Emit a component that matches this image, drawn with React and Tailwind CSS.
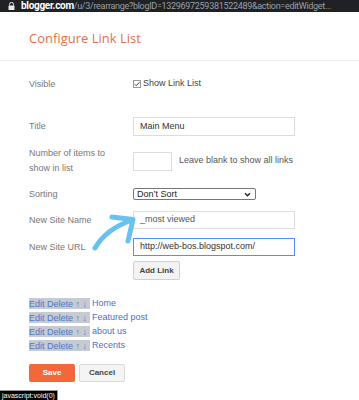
const links = ['Home', 'Featured post', 'about us', 'Recents'];

function Label({ children }) {
  return <div className="w-[104px] shrink-0 text-[9px] leading-[15px] text-[#777]">{children}</div>;
}

export default function App() {
  return (
    <div className="relative h-[400px] w-full overflow-hidden bg-white font-['Liberation_Sans',Arial,sans-serif]">
      {/* address bar */}
      <div className="flex h-[12px] items-center gap-[6px] bg-[#202124] pl-[8px] pr-[2px]">
        <svg width="7" height="8" viewBox="0 0 7 8" className="shrink-0">
          <path d="M1.5 3.5V2.4a2 2 0 0 1 4 0v1.1" fill="none" stroke="#e8e8e8" strokeWidth="1" />
          <rect x="0.5" y="3.5" width="6" height="4.5" rx="0.6" fill="#e8e8e8" />
        </svg>
        <div className="whitespace-nowrap font-['Roboto',sans-serif] text-[10px] leading-[12px] tracking-[-0.3px]">
          <span className="font-bold text-white">blogger.com</span>
          <span className="text-[9px] text-[#9aa0a6]">/u/3/rearrange?blogID=1329697259381522489&amp;action=editWidget...</span>
        </div>
      </div>

      {/* header */}
      <div className="h-[49px] border-b border-[#eeeeee] pl-[29px] pt-[16px]">
        <h1 className="font-['Open_Sans',sans-serif] text-[13px] leading-[20px] text-[#e8704a]">Configure Link List</h1>
      </div>

      <div className="pl-[29px]">
        {/* visible */}
        <div className="mt-[14px] flex h-[18px] items-center">
          <Label>Visible</Label>
          <div className="flex items-center gap-[2px] text-[9px] text-[#444]">
            <span className="flex h-[8px] w-[8px] items-center justify-center border border-[#999] bg-white">
              <svg width="7" height="6" viewBox="0 0 7 6">
                <path d="M0.8 3.2 2.6 5 6.4 0.8" fill="none" stroke="#333" strokeWidth="1.1" />
              </svg>
            </span>
            <span>Show Link List</span>
          </div>
        </div>

        {/* title */}
        <div className="mt-[24px] flex h-[19px] items-center">
          <Label>Title</Label>
          <div className="flex h-[19px] w-[162px] items-center border border-[#dcdcdc] pl-[6px] text-[9px] text-[#333]">
            Main Menu
          </div>
        </div>

        {/* number of items */}
        <div className="mt-[10px] flex items-center">
          <Label>
            Number of items to
            <br />
            show in list
          </Label>
          <div className="h-[19px] w-[39px] border border-[#dcdcdc]" />
          <span className="ml-[7px] text-[9px] text-[#555]">Leave blank to show all links</span>
        </div>

        {/* sorting */}
        <div className="mt-[12px] flex h-[12px] items-center">
          <Label>Sorting</Label>
          <div className="flex h-[12px] w-[123px] items-center justify-between rounded-[2px] border border-[#767676] pl-[3px] pr-[4px] text-[9px] leading-[10px] text-[#222]">
            <span>Don’t Sort</span>
            <svg width="7" height="5" viewBox="0 0 7 5">
              <path d="M1 1.2 3.5 3.7 6 1.2" fill="none" stroke="#222" strokeWidth="1.4" />
            </svg>
          </div>
        </div>

        {/* new site name */}
        <div className="mt-[11px] flex h-[18px] items-center">
          <Label>New Site Name</Label>
          <div className="flex h-[18px] w-[162px] items-center border border-[#dcdcdc] pl-[6px] text-[9px] text-[#555]">
            _most viewed
          </div>
        </div>

        {/* new site url */}
        <div className="mt-[9px] flex h-[18px] items-center">
          <Label>New Site URL</Label>
          <div className="flex h-[18px] w-[162px] items-center border border-[#4d90fe] pl-[6px] text-[9px] text-[#333]">
            http://web-bos.blogspot.com/
          </div>
        </div>

        <div className="ml-[104px] mt-[5px] flex h-[19px] w-[47px] items-center justify-center rounded-[2px] border border-[#d0d0d0] bg-[#f3f3f3] text-[8px] font-bold text-[#444]">
          Add Link
        </div>

        {/* links */}
        <div className="mt-[16px] flex flex-col">
          {links.map((name) => (
            <div key={name} className="flex h-[14px] items-center text-[9px] leading-[12px]">
              <span className="w-[63px] shrink-0">
                <span className="bg-[#c6cad3] py-[0.5px] pr-[3px] text-[#4e78c6]">Edit Delete ↑ ↓</span>
              </span>
              <span className="text-[#4a6fbf]">{name}</span>
            </div>
          ))}
        </div>

        {/* buttons */}
        <div className="mt-[12px] flex gap-[4px]">
          <div className="flex h-[18px] w-[46px] items-center justify-center rounded-[2px] bg-[#f3683a] text-[8px] font-bold text-white">
            Save
          </div>
          <div className="flex h-[18px] w-[46px] items-center justify-center rounded-[2px] border border-[#dadada] bg-[#f4f4f4] text-[8px] font-bold text-[#444]">
            Cancel
          </div>
        </div>
      </div>

      {/* hand-drawn arrow */}
      <svg className="absolute left-[85px] top-[205px]" width="60" height="50" viewBox="0 0 60 50">
        <path
          d="M10 43 Q21 24 47 15 M27 12 L48 14.5 L43 36"
          fill="none"
          stroke="#67c2ef"
          strokeWidth="5"
          strokeLinecap="round"
          strokeLinejoin="round"
        />
      </svg>

      {/* status bubble */}
      <div className="absolute bottom-0 left-0 h-[10px] border-t border-r border-[#999] bg-black px-[2px] text-[7px] leading-[9px] text-white">
        javascript:void(0)
      </div>
    </div>
  );
}
